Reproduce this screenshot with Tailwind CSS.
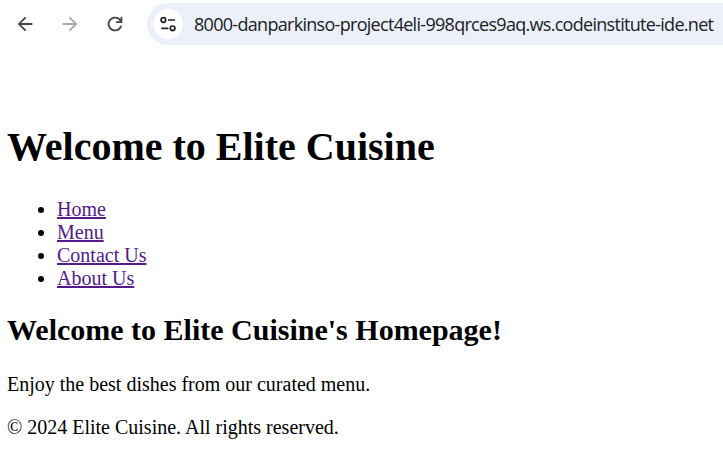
<!DOCTYPE html>
<html lang="en"><head><meta charset="utf-8"><title>Elite Cuisine</title>
<script src="https://cdn.jsdelivr.net/npm/@tailwindcss/browser@4"></script></head>
<body class="bg-white w-[723px] h-[455px] overflow-hidden text-black">
<header class="flex h-[45px] items-start pt-[3px]">
<nav class="flex w-[147px] shrink-0 pl-[14px] pt-[10px] gap-[23px] text-[#474747]">
<svg class="size-[22px]" viewBox="0 0 24 24" fill="currentColor"><path d="M7.8 13l5.6 5.6L12 20l-8-8 8-8 1.4 1.4L7.8 11H20v2z"/></svg>
<svg class="size-[22px] text-[#a8a8a8]" viewBox="0 0 24 24" fill="currentColor"><path d="M16.2 13l-5.6 5.6L12 20l8-8-8-8-1.4 1.4 5.6 5.6H4v2z"/></svg>
<svg class="size-[22px]" viewBox="0 0 24 24" fill="currentColor"><path d="M12 20a8 8 0 1 1 6-13.25V4h2v7h-7V9h4.2A6 6 0 1 0 17.65 14h2.1A8 8 0 0 1 12 20z"/></svg>
</nav>
<div class="flex flex-1 h-[42px] items-center rounded-l-full bg-[#ebf0fa] pl-[6px]">
<span class="flex size-[30px] items-center justify-center rounded-full bg-white text-[#222]"><svg class="size-5" viewBox="0 0 20 20" fill="none" stroke="currentColor" stroke-width="1.7"><path d="M10 6h7M3.3 14.3h7"/><circle cx="5.4" cy="6" r="2.3"/><circle cx="14.6" cy="14.3" r="2.3"/></svg></span>
<svg class="ml-[11px] h-[42px] w-[525px]" viewBox="0 0 525 42"><text x="0" y="28" textLength="520" class="fill-[#202124] font-['Open_Sans',sans-serif] text-[18px]">8000-danparkinso-project4eli-998qrces9aq.ws.codeinstitute-ide.net</text></svg>
</div></header>
<main class="pl-[7px] pt-[79px] font-['Liberation_Serif',serif] text-[20px] leading-[23px]">
<h1 class="text-[40px] leading-[46px] font-bold">Welcome to Elite Cuisine</h1>
<ul class="mt-[28px] list-disc pl-[50px] [&_a]:text-[#551a8b] [&_a]:underline [&_a]:decoration-2 [&_a]:underline-offset-1 [&_a]:[text-decoration-skip-ink:none]"><li><a>Home</a></li><li><a>Menu</a></li><li><a>Contact Us</a></li><li><a>About Us</a></li></ul>
<h2 class="mt-[23px] text-[30px] leading-[34px] font-bold">Welcome to Elite Cuisine's Homepage!</h2>
<p class="mt-[26px]">Enjoy the best dishes from our curated menu.</p>
<p class="mt-[20px]">© 2024 Elite Cuisine. All rights reserved.</p>
</main></body></html>
